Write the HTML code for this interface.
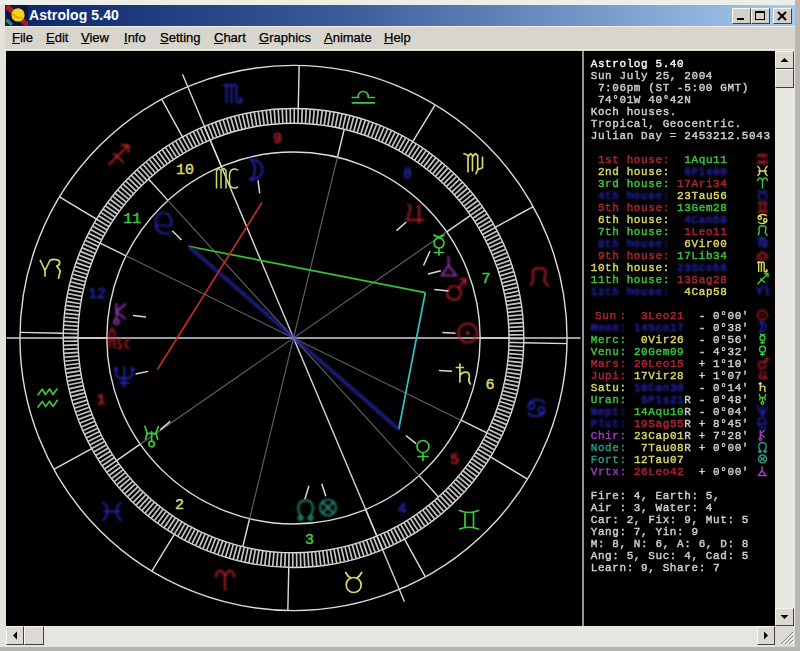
<!DOCTYPE html>
<html><head><meta charset="utf-8"><style>
html,body{margin:0;padding:0;}
body{width:800px;height:651px;overflow:hidden;position:relative;background:#e4e2dc;font-family:"Liberation Sans",sans-serif;}
#top{position:absolute;left:0;top:0;width:800px;height:5px;background:#eeeee8;}
#rframe{position:absolute;left:795px;top:0;width:5px;height:651px;background:#b8b6b0;}
#bframe{position:absolute;left:0;top:647px;width:800px;height:4px;background:#b6b4ae;}
#title{position:absolute;left:5px;top:5px;width:790px;height:21px;background:linear-gradient(to right,#0a246a 0%,#3a5a98 42%,#a6caf0 100%);}
#ttext{position:absolute;left:24px;top:1px;color:#fff;font-weight:bold;font-size:14px;line-height:18px;letter-spacing:0.1px;}
#icon{position:absolute;left:3px;top:1px;width:20px;height:20px;}
.btn{position:absolute;top:3px;width:17px;height:14px;background:#d4d0c8;border-top:1px solid #fff;border-left:1px solid #fff;border-right:1px solid #404040;border-bottom:1px solid #404040;}
#menu{position:absolute;left:5px;top:26px;width:790px;height:25px;background:#d8d5cc;border-top:1px solid #f0f0ec;box-sizing:border-box;}
#menu:after{content:"";position:absolute;left:0;right:0;bottom:1px;height:1px;background:#f0efea;}
.mi{position:absolute;top:4px;font-size:13px;line-height:14px;color:#000;-webkit-text-stroke:0.25px #000;}
.mi u{text-decoration:underline;}
#canvas{position:absolute;left:6px;top:51px;width:769px;height:575px;background:#000;overflow:hidden;}
#vs{position:absolute;left:775px;top:51px;width:20px;height:575px;background:#e8e7e2;}
#hs{position:absolute;left:6px;top:626px;width:769px;height:21px;background:#e6e5e0;}
#grip{position:absolute;left:775px;top:626px;width:20px;height:21px;background:#dcdad4;}
.sbtn{position:absolute;background:#dcd9d2;border-top:1px solid #f4f4f4;border-left:1px solid #f4f4f4;border-right:1px solid #404040;border-bottom:1px solid #404040;}
svg text.mono{font-family:"Liberation Mono",monospace;font-size:11px;letter-spacing:0.6px;stroke-width:0.4px;}
svg text.hn{font-family:"Liberation Mono",monospace;font-size:15px;text-anchor:middle;stroke-width:0.5px;}
</style></head><body>
<div id="top"></div>
<div id="title">
 <svg id="icon" viewBox="0 0 20 20" style="left:1px;top:0px;width:22px;height:21px;"><rect x="0" y="0" width="22" height="21" fill="#0c1440"/><path d="M0 1L21 20" stroke="#a81c1c" stroke-width="5"/><path d="M0 14L5 19" stroke="#2a8a6a" stroke-width="3"/><circle cx="11" cy="9.5" r="6.3" fill="#f2d214"/><path d="M6 8 Q9 13 15 12" stroke="#e09a10" stroke-width="1.6" fill="none"/></svg>
 <div id="ttext">Astrolog 5.40</div>
 <div class="btn" style="left:727px;"><svg width="17" height="14"><rect x="4" y="9" width="7" height="2" fill="#000"/></svg></div>
 <div class="btn" style="left:746px;"><svg width="17" height="14"><rect x="3.5" y="2.5" width="9" height="8" fill="none" stroke="#000" stroke-width="1"/><rect x="3" y="2" width="10" height="2" fill="#000"/></svg></div>
 <div class="btn" style="left:768px;"><svg width="17" height="14"><path d="M4 3L12 11M12 3L4 11" stroke="#000" stroke-width="2"/></svg></div>
</div>
<div id="menu">
 <div class="mi" style="left:7px"><u>F</u>ile</div>
 <div class="mi" style="left:41px"><u>E</u>dit</div>
 <div class="mi" style="left:76px"><u>V</u>iew</div>
 <div class="mi" style="left:119px"><u>I</u>nfo</div>
 <div class="mi" style="left:155px"><u>S</u>etting</div>
 <div class="mi" style="left:209px"><u>C</u>hart</div>
 <div class="mi" style="left:254px"><u>G</u>raphics</div>
 <div class="mi" style="left:319px"><u>A</u>nimate</div>
 <div class="mi" style="left:379px"><u>H</u>elp</div>
</div>
<div id="canvas">
<svg width="769" height="575" viewBox="6 51 769 575" style="position:absolute;left:0;top:0;">
<defs>
<filter id="bg" x="-5%" y="-5%" width="110%" height="110%"><feGaussianBlur stdDeviation="0.4"/></filter>
<filter id="bl" x="-30%" y="-30%" width="160%" height="160%"><feGaussianBlur stdDeviation="1.0"/></filter>
<filter id="br" x="-10%" y="-30%" width="120%" height="160%"><feGaussianBlur stdDeviation="0.8"/></filter>
<filter id="bm" x="-30%" y="-30%" width="160%" height="160%"><feGaussianBlur stdDeviation="0.8"/></filter>
<filter id="bb" x="-10%" y="-10%" width="120%" height="120%"><feGaussianBlur stdDeviation="1.4"/></filter>
<filter id="bt" x="-5%" y="-5%" width="110%" height="110%"><feGaussianBlur stdDeviation="0.45"/></filter>
<filter id="bs" x="-30%" y="-30%" width="160%" height="160%"><feGaussianBlur stdDeviation="0.35"/></filter>
</defs>
<ellipse cx="293.5" cy="338" rx="273.55" ry="272.6" fill="none" stroke="#dcdcdc" stroke-width="1.4"/>
<ellipse cx="293.5" cy="338" rx="230.3" ry="229.5" fill="none" stroke="#dcdcdc" stroke-width="1.4"/>
<ellipse cx="293.5" cy="338" rx="215.55" ry="214.8" fill="none" stroke="#dcdcdc" stroke-width="1.4"/>
<ellipse cx="293.5" cy="338" rx="186.65" ry="186" fill="none" stroke="#dcdcdc" stroke-width="1.4"/>
<path d="M181.89 521.77L174.26 534.34M185.13 523.68L177.71 536.39M188.4 525.53L181.2 538.37M191.7 527.33L184.73 540.29M195.03 529.08L188.29 542.15M198.39 530.76L191.88 543.95M201.78 532.38L195.5 545.69M205.2 533.95L199.16 547.36M208.64 535.46L202.84 548.97M212.11 536.9L206.55 550.51M215.61 538.29L210.28 551.99M219.13 539.61L214.04 553.41M222.67 540.87L217.83 554.76M226.24 542.07L221.63 556.04M229.82 543.21L225.46 557.26M233.42 544.29L229.31 558.41M237.05 545.3L233.18 559.49M240.69 546.25L237.07 560.5M244.34 547.14L240.98 561.45M248.01 547.96L244.9 562.33M251.7 548.72L248.83 563.14M255.39 549.42L252.78 563.88M259.1 550.05L256.75 564.56M262.82 550.61L260.72 565.16M266.55 551.11L264.7 565.7M270.28 551.55L268.7 566.16M274.03 551.92L272.7 566.56M277.78 552.23L276.7 566.89M281.53 552.47L280.71 567.15M285.29 552.64L284.73 567.33M289.05 552.75L288.75 567.45M292.81 552.8L292.76 567.5M296.57 552.78L296.78 567.48M300.33 552.69L300.8 567.38M304.09 552.54L304.82 567.22M307.85 552.32L308.83 566.99M311.6 552.04L312.84 566.69M315.35 551.69L316.84 566.32M319.09 551.28L320.84 565.88M322.82 550.8L324.82 565.37M326.54 550.26L328.8 564.79M330.25 549.65L332.77 564.14M333.95 548.98L336.72 563.42M337.64 548.25L340.66 562.64M341.32 547.45L344.59 561.78M344.98 546.58L348.5 560.86M348.62 545.66L352.4 559.87M352.25 544.67L356.27 558.81M355.86 543.61L360.13 557.69M359.45 542.5L363.97 556.49M363.03 541.32L367.78 555.23M366.58 540.08L371.58 553.91M370.1 538.78L375.35 552.52M373.61 537.42L379.09 551.06M377.09 535.99L382.81 549.54M380.54 534.51L386.5 547.96M383.97 532.96L390.16 546.31M387.37 531.36L393.8 544.59M390.74 529.7L397.4 542.82M394.09 527.98L400.97 540.98M397.4 526.2L404.51 539.08M400.68 524.36L408.01 537.12M403.93 522.47L411.48 535.1M407.14 520.52L414.92 533.01M410.32 518.52L418.31 530.87M413.46 516.46L421.67 528.67M416.57 514.35L424.99 526.41M419.64 512.18L428.27 524.1M422.67 509.96L431.51 521.73M425.66 507.69L434.71 519.3M428.62 505.36L437.86 516.82M431.53 502.99L440.97 514.28M434.39 500.56L444.04 511.69M437.22 498.09L447.06 509.04M440 495.56L450.03 506.34M442.74 492.99L452.95 503.6M445.43 490.37L455.83 500.8M448.08 487.71L458.65 497.95M450.67 484.99L461.43 495.05M453.22 482.24L464.16 492.11M455.73 479.44L466.83 489.12M458.18 476.6L469.45 486.08M460.58 473.71L472.02 483M462.93 470.78L474.53 479.87M465.23 467.82L476.98 476.7M467.48 464.81L479.39 473.49M469.67 461.77L481.73 470.24M471.81 458.68L484.02 466.94M473.9 455.56L486.25 463.61M475.93 452.41L488.42 460.24M477.91 449.22L490.53 456.83M479.83 445.99L492.58 453.38M481.69 442.74L494.57 449.9M483.5 439.45L496.5 446.39M485.24 436.13L498.37 442.84M486.93 432.78L500.17 439.26M488.56 429.4L501.91 435.65M490.14 425.99L503.59 432.02M491.65 422.56L505.21 428.35M493.1 419.1L506.76 424.65M494.49 415.62L508.24 420.93M495.82 412.11L509.66 417.18M497.08 408.58L511.02 413.41M498.29 405.03L512.3 409.62M499.43 401.46L513.52 405.8M500.51 397.87L514.68 401.96M501.53 394.26L515.76 398.11M502.48 390.63L516.78 394.23M503.37 386.99L517.73 390.34M504.2 383.33L518.62 386.43M504.96 379.66L519.43 382.51M505.66 375.98L520.18 378.57M506.29 372.28L520.85 374.63M506.86 368.57L521.46 370.67M507.36 364.86L522 366.7M507.8 361.13L522.46 362.72M508.17 357.4L522.86 358.73M508.48 353.67L523.19 354.74M508.72 349.93L523.45 350.74M508.9 346.18L523.64 346.74M509.01 342.43L523.75 342.74M509.05 338.69L523.8 338.73M509.03 334.94L523.78 334.73M508.94 331.19L523.69 330.72M508.79 327.44L523.52 326.72M508.57 323.7L523.29 322.72M508.29 319.96L522.99 318.73M507.94 316.23L522.62 314.74M507.53 312.5L522.18 310.76M507.05 308.79L521.66 306.79M506.5 305.08L521.08 302.82M505.9 301.38L520.43 298.87M505.22 297.69L519.71 294.93M504.48 294.01L518.92 291M503.68 290.35L518.06 287.09M502.81 286.7L517.14 283.19M501.88 283.07L516.15 279.31M500.89 279.45L515.08 275.45M499.83 275.85L513.95 271.6M498.71 272.28L512.76 267.78M497.53 268.72L511.49 263.98M496.29 265.18L510.16 260.2M494.98 261.66L508.77 256.44M493.61 258.17L507.31 252.71M492.18 254.7L505.78 249M490.7 251.26L504.19 245.32M489.15 247.84L502.54 241.67M487.54 244.45L500.82 238.05M485.87 241.09L499.03 234.46M484.14 237.76L497.19 230.9M482.36 234.46L495.28 227.38M480.52 231.19L493.32 223.89M478.62 227.96L491.29 220.43M476.66 224.76L489.2 217.01M474.65 221.59L487.05 213.62M472.58 218.45L484.84 210.27M470.46 215.36L482.57 206.97M468.29 212.3L480.25 203.7M466.06 209.28L477.87 200.47M463.78 206.3L475.43 197.28M461.45 203.36L472.94 194.14M459.06 200.46L470.39 191.04M456.63 197.6L467.79 187.99M454.15 194.78L465.14 184.98M451.61 192.01L462.43 182.02M449.03 189.28L459.68 179.1M446.4 186.6L456.87 176.24M443.73 183.96L454.01 173.42M441.01 181.37L451.1 170.66M438.24 178.83L448.15 167.94M435.43 176.34L445.15 165.28M432.58 173.9L442.1 162.66M429.69 171.5L439.01 160.11M426.75 169.16L435.87 157.6M423.77 166.87L432.69 155.16M420.75 164.63L429.46 152.76M417.7 162.44L426.2 150.43M414.61 160.31L422.89 148.15M411.47 158.23L419.55 145.93M408.31 156.2L416.17 143.76M405.11 154.23L412.74 141.66M401.87 152.32L409.29 139.61M398.6 150.47L405.8 137.63M395.3 148.67L402.27 135.71M391.97 146.92L398.71 133.85M388.61 145.24L395.12 132.05M385.22 143.62L391.5 130.31M381.8 142.05L387.84 128.64M378.36 140.54L384.16 127.03M374.89 139.1L380.45 125.49M371.39 137.71L376.72 124.01M367.87 136.39L372.96 122.59M364.33 135.13L369.17 121.24M360.76 133.93L365.37 119.96M357.18 132.79L361.54 118.74M353.58 131.71L357.69 117.59M349.95 130.7L353.82 116.51M346.31 129.75L349.93 115.5M342.66 128.86L346.02 114.55M338.99 128.04L342.1 113.67M335.3 127.28L338.17 112.86M331.61 126.58L334.22 112.12M327.9 125.95L330.25 111.44M324.18 125.39L326.28 110.84M320.45 124.89L322.3 110.3M316.72 124.45L318.3 109.84M312.97 124.08L314.3 109.44M309.22 123.77L310.3 109.11M305.47 123.53L306.29 108.85M301.71 123.36L302.27 108.67M297.95 123.25L298.25 108.55M294.19 123.2L294.24 108.5M290.43 123.22L290.22 108.52M286.67 123.31L286.2 108.62M282.91 123.46L282.18 108.78M279.15 123.68L278.17 109.01M275.4 123.96L274.16 109.31M271.65 124.31L270.16 109.68M267.91 124.72L266.16 110.12M264.18 125.2L262.18 110.63M260.46 125.74L258.2 111.21M256.75 126.35L254.23 111.86M253.05 127.02L250.28 112.58M249.36 127.75L246.34 113.36M245.68 128.55L242.41 114.22M242.02 129.42L238.5 115.14M238.38 130.34L234.6 116.13M234.75 131.33L230.73 117.19M231.14 132.39L226.87 118.31M227.55 133.5L223.03 119.51M223.97 134.68L219.22 120.77M220.42 135.92L215.42 122.09M216.9 137.22L211.65 123.48M213.39 138.58L207.91 124.94M209.91 140.01L204.19 126.46M206.46 141.49L200.5 128.04M203.03 143.04L196.84 129.69M199.63 144.64L193.2 131.41M196.26 146.3L189.6 133.18M192.91 148.02L186.03 135.02M189.6 149.8L182.49 136.92M186.32 151.64L178.99 138.88M183.07 153.53L175.52 140.9M179.86 155.48L172.08 142.99M176.68 157.48L168.69 145.13M173.54 159.54L165.33 147.33M170.43 161.65L162.01 149.59M167.36 163.82L158.73 151.9M164.33 166.04L155.49 154.27M161.34 168.31L152.29 156.7M158.38 170.64L149.14 159.18M155.47 173.01L146.03 161.72M152.61 175.44L142.96 164.31M149.78 177.91L139.94 166.96M147 180.44L136.97 169.66M144.26 183.01L134.05 172.4M141.57 185.63L131.17 175.2M138.92 188.29L128.35 178.05M136.33 191.01L125.57 180.95M133.78 193.76L122.84 183.89M131.27 196.56L120.17 186.88M128.82 199.4L117.55 189.92M126.42 202.29L114.98 193M124.07 205.22L112.47 196.13M121.77 208.18L110.02 199.3M119.52 211.19L107.61 202.51M117.33 214.23L105.27 205.76M115.19 217.32L102.98 209.06M113.1 220.44L100.75 212.39M111.07 223.59L98.58 215.76M109.09 226.78L96.47 219.17M107.17 230.01L94.42 222.62M105.31 233.26L92.43 226.1M103.5 236.55L90.5 229.61M101.76 239.87L88.63 233.16M100.07 243.22L86.83 236.74M98.44 246.6L85.09 240.35M96.86 250.01L83.41 243.98M95.35 253.44L81.79 247.65M93.9 256.9L80.24 251.35M92.51 260.38L78.76 255.07M91.18 263.89L77.34 258.82M89.92 267.42L75.98 262.59M88.71 270.97L74.7 266.38M87.57 274.54L73.48 270.2M86.49 278.13L72.32 274.04M85.47 281.74L71.24 277.89M84.52 285.37L70.22 281.77M83.63 289.01L69.27 285.66M82.8 292.67L68.38 289.57M82.04 296.34L67.57 293.49M81.34 300.02L66.82 297.43M80.71 303.72L66.15 301.37M80.14 307.43L65.54 305.33M79.64 311.14L65 309.3M79.2 314.87L64.54 313.28M78.83 318.6L64.14 317.27M78.52 322.33L63.81 321.26M78.28 326.07L63.55 325.26M78.1 329.82L63.36 329.26M77.99 333.57L63.25 333.26M77.95 337.31L63.2 337.27M77.97 341.06L63.22 341.27M78.06 344.81L63.31 345.28M78.21 348.56L63.48 349.28M78.43 352.3L63.71 353.28M78.71 356.04L64.01 357.27M79.06 359.77L64.38 361.26M79.47 363.5L64.82 365.24M79.95 367.21L65.34 369.21M80.5 370.92L65.92 373.18M81.1 374.62L66.57 377.13M81.78 378.31L67.29 381.07M82.52 381.99L68.08 385M83.32 385.65L68.94 388.91M84.19 389.3L69.86 392.81M85.12 392.93L70.85 396.69M86.11 396.55L71.92 400.55M87.17 400.15L73.05 404.4M88.29 403.72L74.24 408.22M89.47 407.28L75.51 412.02M90.71 410.82L76.84 415.8M92.02 414.34L78.23 419.56M93.39 417.83L79.69 423.29M94.82 421.3L81.22 427M96.3 424.74L82.81 430.68M97.85 428.16L84.46 434.33M99.46 431.55L86.18 437.95M101.13 434.91L87.97 441.54M102.86 438.24L89.81 445.1M104.64 441.54L91.72 448.62M106.48 444.81L93.68 452.11M108.38 448.04L95.71 455.57M110.34 451.24L97.8 458.99M112.35 454.41L99.95 462.38M114.42 457.55L102.16 465.73M116.54 460.64L104.43 469.03M118.71 463.7L106.75 472.3M120.94 466.72L109.13 475.53M123.22 469.7L111.57 478.72M125.55 472.64L114.06 481.86M127.94 475.54L116.61 484.96M130.37 478.4L119.21 488.01M132.85 481.22L121.86 491.02M135.39 483.99L124.57 493.98M137.97 486.72L127.32 496.9M140.6 489.4L130.13 499.76M143.27 492.04L132.99 502.58M145.99 494.63L135.9 505.34M148.76 497.17L138.85 508.06M151.57 499.66L141.85 510.72M154.42 502.1L144.9 513.34M157.31 504.5L147.99 515.89M160.25 506.84L151.13 518.4M163.23 509.13L154.31 520.84M166.25 511.37L157.54 523.24M169.3 513.56L160.8 525.57M172.39 515.69L164.11 527.85M175.53 517.77L167.45 530.07M178.69 519.8L170.83 532.24" stroke="#c4c4c4" stroke-width="1.7" fill="none"/>
<path d="M174.26 534.34L151.86 571.21M288.75 567.45L287.85 610.54M404.51 539.08L425.36 576.84M490.53 456.83L527.53 479.14M523.75 342.74L567 343.63M495.28 227.38L533.18 206.6M412.74 141.66L435.14 104.79M298.25 108.55L299.15 65.46M182.49 136.92L161.64 99.16M96.47 219.17L59.47 196.86M63.25 333.26L20 332.37M91.72 448.62L53.82 469.4" stroke="#dcdcdc" stroke-width="1.4" fill="none"/>
<path d="M140.26 444.2L446.74 231.8M249.56 518.77L337.44 157.23M419.08 475.61L167.92 200.39M460.95 420.17L126.05 255.83" stroke="#5e5e5e" stroke-width="1.2" fill="none"/>
<path d="M77.95 338L106.85 338M116.54 460.64L140.26 444.2M242.76 546.76L249.56 518.77M376.86 536.09L365.68 509.53M438.52 496.91L419.08 475.61M486.88 432.89L460.95 420.17M509.05 338L480.15 338M470.46 215.36L446.74 231.8M344.24 129.24L337.44 157.23M210.14 139.91L221.32 166.47M148.48 179.09L167.92 200.39M100.12 243.11L126.05 255.83" stroke="#dcdcdc" stroke-width="1.4" fill="none"/>
<path d="M6.5 338L580.5 338M404.49 601.75L182.51 74.25" stroke="#d4d4d4" stroke-width="1.4" fill="none"/>
<text x="101.04" y="403.64" fill="#cc2232" stroke="#cc2232" class="hn" filter="url(#bl)">1</text>
<text x="179.55" y="509.35" fill="#d8d866" stroke="#d8d866" class="hn">2</text>
<text x="309.56" y="543.86" fill="#3cc83c" stroke="#3cc83c" class="hn">3</text>
<text x="401.93" y="512.99" fill="#2a2ac0" stroke="#2a2ac0" class="hn" filter="url(#bl)">4</text>
<text x="454.66" y="464.37" fill="#cc2232" stroke="#cc2232" class="hn" filter="url(#bl)">5</text>
<text x="489.95" y="389.08" fill="#d8d866" stroke="#d8d866" class="hn">6</text>
<text x="485.96" y="283.36" fill="#3cc83c" stroke="#3cc83c" class="hn">7</text>
<text x="407.45" y="177.65" fill="#2a2ac0" stroke="#2a2ac0" class="hn" filter="url(#bl)">8</text>
<text x="277.44" y="143.14" fill="#cc2232" stroke="#cc2232" class="hn" filter="url(#bl)">9</text>
<text x="185.07" y="174.01" fill="#d8d866" stroke="#d8d866" class="hn">10</text>
<text x="132.34" y="222.63" fill="#3cc83c" stroke="#3cc83c" class="hn">11</text>
<text x="97.05" y="297.92" fill="#2a2ac0" stroke="#2a2ac0" class="hn" filter="url(#bl)">12</text>
<path transform="translate(225 580)" d="M0 10L0 -3C-1 -8 -4 -10 -6 -9C-8 -8 -9 -6 -9 -3M0 -3C1 -8 4 -10 6 -9C8 -8 9 -6 9 -3" stroke="#cc2232" stroke-width="1.7" fill="none" stroke-linejoin="round" stroke-linecap="round" filter="url(#bl)"/>
<path transform="translate(353.7 582.5)" d="M7.5 2.5A7.5 7.5 0 1 1 -7.5 2.5A7.5 7.5 0 1 1 7.5 2.5M-8 -10Q-6 -6 -3 -4.5M8 -10Q6 -6 3 -4.5" stroke="#d8d866" stroke-width="1.7" fill="none" stroke-linejoin="round" stroke-linecap="round"/>
<path transform="translate(469 519.5)" d="M-9.5 -9Q0 -5 9.5 -9M-9.5 9.5Q0 6 9.5 9.5M-4 -6.5L-4 7.5M4.5 -6.5L4.5 7.5" stroke="#3cc83c" stroke-width="1.7" fill="none" stroke-linejoin="round" stroke-linecap="round"/>
<path transform="translate(536.5 408)" d="M-8 -3C-7 -9 5 -10 8 -5M8 3C7 9 -5 10 -8 5M-2 -2A3 3 0 1 1 -8 -2A3 3 0 1 1 -2 -2M8 2A3 3 0 1 1 2 2A3 3 0 1 1 8 2" stroke="#2a2ac0" stroke-width="1.7" fill="none" stroke-linejoin="round" stroke-linecap="round" filter="url(#bl)"/>
<path transform="translate(539.2 277.3)" d="M-8.5 8L-6 3.5L-6.5 -6L-4 -9L4 -9L6.5 -6L5 3.5L9 9" stroke="#cc2232" stroke-width="1.7" fill="none" stroke-linejoin="round" stroke-linecap="round" filter="url(#bl)"/>
<path transform="translate(474 163.7)" d="M-10 -10L-6 -8.5L-6 8M-6 -7L-3.5 -10L-1.5 -8.5L-1.5 7M-1.5 -7L1.5 -10L3.7 -8L3.7 6L2 10M3.7 6L8.5 4L8.5 -6.5" stroke="#d8d866" stroke-width="1.7" fill="none" stroke-linejoin="round" stroke-linecap="round"/>
<path transform="translate(363.4 96.5)" d="M-11 6.3L11 6.3M-11 1L-5 1C-6.5 -7 6 -7 4.8 1L11 1" stroke="#3cc83c" stroke-width="1.7" fill="none" stroke-linejoin="round" stroke-linecap="round"/>
<path transform="translate(233.5 93.5)" d="M-10 -8L-7 -9L-7 9M-7 -6C-6 -10 -2 -10 -2 -6L-2 9M-2 -6C-1 -10 3 -10 3 -6L3 7C3 9 6 9 9 7M9 7L6.5 4M9 7L5.5 9.5" stroke="#2a2ac0" stroke-width="1.7" fill="none" stroke-linejoin="round" stroke-linecap="round" filter="url(#bl)"/>
<path transform="translate(118.5 155.2)" d="M-9.5 9.5L10 -10M3 -10L10 -10L10 -3M-4.5 -1.5L4.5 7" stroke="#cc2232" stroke-width="1.7" fill="none" stroke-linejoin="round" stroke-linecap="round" filter="url(#bl)"/>
<path transform="translate(50.3 268.5)" d="M-10 -8L-5.3 2L-0.4 -8M-5.3 2L-5.3 7.5M-0.4 -8C3 -10 9.4 -9 9.4 -6C9.4 -3 6.4 -2.5 6.4 -2.5L10 2.4L8.2 9.7" stroke="#d8d866" stroke-width="1.7" fill="none" stroke-linejoin="round" stroke-linecap="round"/>
<path transform="translate(47.7 398)" d="M-9.7 -3.3L-5.4 -8.8L-2.4 -3.5L1.9 -9L5.3 -3.5L9.3 -9M-9.7 9L-5.4 3.5L-2.1 8.4L1.9 3.2L5.3 8.4L9.6 2.3" stroke="#3cc83c" stroke-width="1.7" fill="none" stroke-linejoin="round" stroke-linecap="round"/>
<path transform="translate(112 511.3)" d="M-9 -9C-3 -4 -3 4 -9 9M9 -9C3 -4 3 4 9 9M-8 0L8 0" stroke="#2a2ac0" stroke-width="1.7" fill="none" stroke-linejoin="round" stroke-linecap="round" filter="url(#bl)"/>
<path transform="translate(467.7 333)" d="M9.5 0A9.5 9.5 0 1 1 -9.5 0A9.5 9.5 0 1 1 9.5 0M1 0A1 1 0 1 1 -1 0A1 1 0 1 1 1 0" stroke="#cc2232" stroke-width="1.7" fill="none" stroke-linejoin="round" stroke-linecap="round" filter="url(#bl)"/>
<path transform="translate(255.7 169.5)" d="M-6 -10.5C11 -10.5 11 10.5 -6 10.5C1 6 1 -6 -6 -10.5Z" stroke="#2a2ac0" stroke-width="1.7" fill="none" stroke-linejoin="round" stroke-linecap="round" filter="url(#bl)"/>
<path transform="translate(439 245)" d="M-5 -10Q0 -6 5 -10M5 -2A5 5 0 1 1 -5 -2A5 5 0 1 1 5 -2M0 3L0 10M-4.5 7.5L4.5 7.5" stroke="#3cc83c" stroke-width="1.7" fill="none" stroke-linejoin="round" stroke-linecap="round"/>
<path transform="translate(423 450)" d="M6 -3.5A6 6 0 1 1 -6 -3.5A6 6 0 1 1 6 -3.5M0 2.5L0 10.5M-5 6.5L5 6.5" stroke="#3cc83c" stroke-width="1.7" fill="none" stroke-linejoin="round" stroke-linecap="round"/>
<path transform="translate(455 289)" d="M6 4A7 7 0 1 1 -8 4A7 7 0 1 1 6 4M4 -1L10.5 -10M5 -10L10.5 -10L10.5 -4.5" stroke="#cc2232" stroke-width="1.7" fill="none" stroke-linejoin="round" stroke-linecap="round" filter="url(#bl)"/>
<path transform="translate(413.8 213.8)" d="M-5.8 -9C-3 -8 -3 -6 -3.5 -4L-6.7 6L10 6M5.2 -9L5.2 9.5" stroke="#cc2232" stroke-width="1.7" fill="none" stroke-linejoin="round" stroke-linecap="round" filter="url(#bl)"/>
<path transform="translate(464.4 374)" d="M-4.5 -10L-4.5 8M-8 -6.5L-1 -6.5M-4.5 1.5C-2 -3 5 -3 5 2C5 5 3 7 6 10" stroke="#d8d866" stroke-width="1.7" fill="none" stroke-linejoin="round" stroke-linecap="round"/>
<path transform="translate(151.6 436.2)" d="M-6.7 -10L-4.3 -2.8L-6.1 3M6.7 -9.5L4.3 -2.8L6.1 3M-4.9 -2.8L4.9 -2.8M0 -4.6L0 4.6M2.8 7.7A2.8 2.8 0 1 1 -2.8 7.7A2.8 2.8 0 1 1 2.8 7.7" stroke="#3cc83c" stroke-width="1.7" fill="none" stroke-linejoin="round" stroke-linecap="round"/>
<path transform="translate(124.2 376.8)" d="M-8.5 -9L-8 -2C-7 3 7 3 8 -2L8.5 -9M0 -10L0 10M-5 6L5 6M-9.5 -7L-8.5 -9.5L-7 -7M7 -7L8.5 -9.5L9.5 -7" stroke="#2a2ac0" stroke-width="1.7" fill="none" stroke-linejoin="round" stroke-linecap="round" filter="url(#bl)"/>
<path transform="translate(164.5 223.5)" d="M-9 2L7 2C8 -6 3 -11 -1 -11C-6 -11 -9 -6 -9 0C-9 7 -4 10 0 10L7 10" stroke="#2a2ac0" stroke-width="1.7" fill="none" stroke-linejoin="round" stroke-linecap="round" filter="url(#bl)"/>
<path transform="translate(121 313.8)" d="M-4.5 -10L-4.5 5M-4.5 -2L4.5 -10M-4.5 -2L4.5 5M-2 8A2.5 2.5 0 1 1 -7 8A2.5 2.5 0 1 1 -2 8" stroke="#a03cc0" stroke-width="1.7" fill="none" stroke-linejoin="round" stroke-linecap="round" filter="url(#bm)"/>
<path transform="translate(305.6 509.4)" d="M-5 6C-9 0 -8 -9 0 -9C8 -9 9 0 5 6M-5 6L-7.5 9L-5 11L-2.5 8.5L-5 6M5 6L7.5 9L5 11L2.5 8.5L5 6" stroke="#2c9884" stroke-width="1.7" fill="none" stroke-linejoin="round" stroke-linecap="round" filter="url(#bm)"/>
<path transform="translate(328 507.5)" d="M8 0A8 8 0 1 1 -8 0A8 8 0 1 1 8 0M-5.6 -5.6L5.6 5.6M5.6 -5.6L-5.6 5.6" stroke="#2c9884" stroke-width="1.7" fill="none" stroke-linejoin="round" stroke-linecap="round" filter="url(#bm)"/>
<path transform="translate(449.5 266.5)" d="M-1 -10L-1 -1M-1 -1L-8 9L7 9L-1 -1" stroke="#a03cc0" stroke-width="1.7" fill="none" stroke-linejoin="round" stroke-linecap="round" filter="url(#bm)"/>
<path d="M442.41 332.38L455.5 333.37M259.73 193.36L258.03 180.42M423.52 265.45L430.05 251.02M405.91 435.49L416.08 443.65M434.34 289.49L448.58 291.11M396.48 230.66L406.26 222M438.88 370.6L452.08 371.29M170.2 421.4L160.23 429.9M148.29 371.37L135.53 374.08M181.52 240.02L172.29 230.79M145.99 316.91L133.01 315.56M308.94 485.7L304.91 499.1M321.77 483.8L325.82 496.26M427.98 274.03L440.83 270.71" stroke="#d8d8d8" stroke-width="1.5" fill="none"/>
<path transform="translate(227 178.5)" d="M-10.5 10L-10.5 -8L-8.5 -10L-6 -8L-6 10M-6 -8L-3 -10L-1 -8L-1 10M11 -8C9 -10.5 2.5 -10.5 2.5 -3L2.5 4C2.5 10.5 9 10.5 11 8" stroke="#d8d866" stroke-width="1.5" fill="none"/>
<path transform="translate(119.5 338.4)" d="M-10 10L-10 -6L-7.5 -10L-5 -6L-5 10M-10 1L-5 1M2 1C-1 -0.5 -2.5 3 0 5C2.5 7 3 10 -2 10M10 2C5 0 4 10 10 10" stroke="#cc2232" stroke-width="1.5" fill="none" filter="url(#bl)"/>
<line x1="188.68" y1="246.29" x2="425.33" y2="292.59" stroke="#34c434" stroke-width="1.7"/>
<line x1="425.33" y1="292.59" x2="398.72" y2="429.25" stroke="#34c4c4" stroke-width="1.7"/>
<line x1="188.68" y1="246.29" x2="398.72" y2="429.25" stroke="#2a2ab4" stroke-width="2.6" filter="url(#bb)"/>
<line x1="261.89" y1="202.62" x2="157.58" y2="369.24" stroke="#c42a2a" stroke-width="1.7"/>
<line x1="583" y1="51" x2="583" y2="626" stroke="#949494" stroke-width="2"/>
<g filter="url(#bt)"><text transform="translate(590.7 67) scale(1 1.03)" fill="#f4f4f4" stroke="#f4f4f4" class="mono">Astrolog&#160;5.40</text>
<text transform="translate(590.7 79) scale(1 1.03)" fill="#d0d0d0" stroke="#d0d0d0" class="mono">Sun&#160;July&#160;25,&#160;2004</text>
<text transform="translate(590.7 91) scale(1 1.03)" fill="#d0d0d0" stroke="#d0d0d0" class="mono">&#160;7:06pm&#160;(ST&#160;-5:00&#160;GMT)</text>
<text transform="translate(590.7 103) scale(1 1.03)" fill="#d0d0d0" stroke="#d0d0d0" class="mono">&#160;74°01W&#160;40°42N</text>
<text transform="translate(590.7 115) scale(1 1.03)" fill="#d0d0d0" stroke="#d0d0d0" class="mono">Koch&#160;houses.</text>
<text transform="translate(590.7 127) scale(1 1.03)" fill="#d0d0d0" stroke="#d0d0d0" class="mono">Tropical,&#160;Geocentric.</text>
<text transform="translate(590.7 139) scale(1 1.03)" fill="#d0d0d0" stroke="#d0d0d0" class="mono">Julian&#160;Day&#160;=&#160;2453212.5043</text>
<text transform="translate(590.7 163) scale(1 1.03)" fill="#b42434" stroke="#b42434" class="mono">&#160;1st&#160;house:</text>
<text transform="translate(677.1 163) scale(1 1.03)" fill="#3cc83c" stroke="#3cc83c" class="mono">&#160;1Aqu11</text>
<text transform="translate(590.7 175) scale(1 1.03)" fill="#d8d866" stroke="#d8d866" class="mono">&#160;2nd&#160;house:</text>
<text transform="translate(677.1 175) scale(1 1.03)" fill="#2a2ac0" stroke="#2a2ac0" class="mono" filter="url(#bl)">&#160;6Pis00</text>
<text transform="translate(590.7 187) scale(1 1.03)" fill="#3cc83c" stroke="#3cc83c" class="mono">&#160;3rd&#160;house:</text>
<text transform="translate(677.1 187) scale(1 1.03)" fill="#b42434" stroke="#b42434" class="mono">17Ari34</text>
<text transform="translate(590.7 199) scale(1 1.03)" fill="#2a2ac0" stroke="#2a2ac0" class="mono" filter="url(#bl)">&#160;4th&#160;house:</text>
<text transform="translate(677.1 199) scale(1 1.03)" fill="#d8d866" stroke="#d8d866" class="mono">23Tau56</text>
<text transform="translate(590.7 211) scale(1 1.03)" fill="#b42434" stroke="#b42434" class="mono">&#160;5th&#160;house:</text>
<text transform="translate(677.1 211) scale(1 1.03)" fill="#3cc83c" stroke="#3cc83c" class="mono">13Gem28</text>
<text transform="translate(590.7 223) scale(1 1.03)" fill="#d8d866" stroke="#d8d866" class="mono">&#160;6th&#160;house:</text>
<text transform="translate(677.1 223) scale(1 1.03)" fill="#2a2ac0" stroke="#2a2ac0" class="mono" filter="url(#bl)">&#160;4Can58</text>
<text transform="translate(590.7 235) scale(1 1.03)" fill="#3cc83c" stroke="#3cc83c" class="mono">&#160;7th&#160;house:</text>
<text transform="translate(677.1 235) scale(1 1.03)" fill="#b42434" stroke="#b42434" class="mono">&#160;1Leo11</text>
<text transform="translate(590.7 247) scale(1 1.03)" fill="#2a2ac0" stroke="#2a2ac0" class="mono" filter="url(#bl)">&#160;8th&#160;house:</text>
<text transform="translate(677.1 247) scale(1 1.03)" fill="#d8d866" stroke="#d8d866" class="mono">&#160;6Vir00</text>
<text transform="translate(590.7 259) scale(1 1.03)" fill="#b42434" stroke="#b42434" class="mono">&#160;9th&#160;house:</text>
<text transform="translate(677.1 259) scale(1 1.03)" fill="#3cc83c" stroke="#3cc83c" class="mono">17Lib34</text>
<text transform="translate(590.7 271) scale(1 1.03)" fill="#d8d866" stroke="#d8d866" class="mono">10th&#160;house:</text>
<text transform="translate(677.1 271) scale(1 1.03)" fill="#2a2ac0" stroke="#2a2ac0" class="mono" filter="url(#bl)">23Sco56</text>
<text transform="translate(590.7 283) scale(1 1.03)" fill="#3cc83c" stroke="#3cc83c" class="mono">11th&#160;house:</text>
<text transform="translate(677.1 283) scale(1 1.03)" fill="#b42434" stroke="#b42434" class="mono">13Sag28</text>
<text transform="translate(590.7 295) scale(1 1.03)" fill="#2a2ac0" stroke="#2a2ac0" class="mono" filter="url(#bl)">12th&#160;house:</text>
<text transform="translate(677.1 295) scale(1 1.03)" fill="#d8d866" stroke="#d8d866" class="mono">&#160;4Cap58</text>
<text transform="translate(595.02 319) scale(1 1.03)" fill="#b42434" stroke="#b42434" class="mono">Sun</text>
<text transform="translate(619.5 319) scale(1 1.03)" fill="#b42434" stroke="#b42434" class="mono">:</text>
<text transform="translate(633.9 319) scale(1 1.03)" fill="#b42434" stroke="#b42434" class="mono">&#160;3Leo21</text>
<text transform="translate(698.7 319) scale(1 1.03)" fill="#d0d0d0" stroke="#d0d0d0" class="mono">-&#160;0°00'</text>
<text transform="translate(590.7 331) scale(1 1.03)" fill="#2a2ac0" stroke="#2a2ac0" class="mono" filter="url(#bl)">Moon</text>
<text transform="translate(619.5 331) scale(1 1.03)" fill="#2a2ac0" stroke="#2a2ac0" class="mono" filter="url(#bl)">:</text>
<text transform="translate(633.9 331) scale(1 1.03)" fill="#2a2ac0" stroke="#2a2ac0" class="mono" filter="url(#bl)">14Sco17</text>
<text transform="translate(698.7 331) scale(1 1.03)" fill="#d0d0d0" stroke="#d0d0d0" class="mono">-&#160;0°38'</text>
<text transform="translate(590.7 343) scale(1 1.03)" fill="#3cc83c" stroke="#3cc83c" class="mono">Merc</text>
<text transform="translate(619.5 343) scale(1 1.03)" fill="#3cc83c" stroke="#3cc83c" class="mono">:</text>
<text transform="translate(633.9 343) scale(1 1.03)" fill="#d8d866" stroke="#d8d866" class="mono">&#160;0Vir26</text>
<text transform="translate(698.7 343) scale(1 1.03)" fill="#d0d0d0" stroke="#d0d0d0" class="mono">-&#160;0°56'</text>
<text transform="translate(590.7 355) scale(1 1.03)" fill="#3cc83c" stroke="#3cc83c" class="mono">Venu</text>
<text transform="translate(619.5 355) scale(1 1.03)" fill="#3cc83c" stroke="#3cc83c" class="mono">:</text>
<text transform="translate(633.9 355) scale(1 1.03)" fill="#3cc83c" stroke="#3cc83c" class="mono">20Gem09</text>
<text transform="translate(698.7 355) scale(1 1.03)" fill="#d0d0d0" stroke="#d0d0d0" class="mono">-&#160;4°32'</text>
<text transform="translate(590.7 367) scale(1 1.03)" fill="#b42434" stroke="#b42434" class="mono">Mars</text>
<text transform="translate(619.5 367) scale(1 1.03)" fill="#b42434" stroke="#b42434" class="mono">:</text>
<text transform="translate(633.9 367) scale(1 1.03)" fill="#b42434" stroke="#b42434" class="mono">20Leo15</text>
<text transform="translate(698.7 367) scale(1 1.03)" fill="#d0d0d0" stroke="#d0d0d0" class="mono">+&#160;1°10'</text>
<text transform="translate(590.7 379) scale(1 1.03)" fill="#b42434" stroke="#b42434" class="mono">Jupi</text>
<text transform="translate(619.5 379) scale(1 1.03)" fill="#b42434" stroke="#b42434" class="mono">:</text>
<text transform="translate(633.9 379) scale(1 1.03)" fill="#d8d866" stroke="#d8d866" class="mono">17Vir28</text>
<text transform="translate(698.7 379) scale(1 1.03)" fill="#d0d0d0" stroke="#d0d0d0" class="mono">+&#160;1°07'</text>
<text transform="translate(590.7 391) scale(1 1.03)" fill="#d8d866" stroke="#d8d866" class="mono">Satu</text>
<text transform="translate(619.5 391) scale(1 1.03)" fill="#d8d866" stroke="#d8d866" class="mono">:</text>
<text transform="translate(633.9 391) scale(1 1.03)" fill="#2a2ac0" stroke="#2a2ac0" class="mono" filter="url(#bl)">18Can30</text>
<text transform="translate(698.7 391) scale(1 1.03)" fill="#d0d0d0" stroke="#d0d0d0" class="mono">-&#160;0°14'</text>
<text transform="translate(590.7 403) scale(1 1.03)" fill="#3cc83c" stroke="#3cc83c" class="mono">Uran</text>
<text transform="translate(619.5 403) scale(1 1.03)" fill="#3cc83c" stroke="#3cc83c" class="mono">:</text>
<text transform="translate(633.9 403) scale(1 1.03)" fill="#2a2ac0" stroke="#2a2ac0" class="mono" filter="url(#bl)">&#160;5Pis21</text>
<text transform="translate(684.3 403) scale(1 1.03)" fill="#d0d0d0" stroke="#d0d0d0" class="mono">R</text>
<text transform="translate(698.7 403) scale(1 1.03)" fill="#d0d0d0" stroke="#d0d0d0" class="mono">-&#160;0°48'</text>
<text transform="translate(590.7 415) scale(1 1.03)" fill="#2a2ac0" stroke="#2a2ac0" class="mono" filter="url(#bl)">Nept</text>
<text transform="translate(619.5 415) scale(1 1.03)" fill="#2a2ac0" stroke="#2a2ac0" class="mono" filter="url(#bl)">:</text>
<text transform="translate(633.9 415) scale(1 1.03)" fill="#3cc83c" stroke="#3cc83c" class="mono">14Aqu10</text>
<text transform="translate(684.3 415) scale(1 1.03)" fill="#d0d0d0" stroke="#d0d0d0" class="mono">R</text>
<text transform="translate(698.7 415) scale(1 1.03)" fill="#d0d0d0" stroke="#d0d0d0" class="mono">-&#160;0°04'</text>
<text transform="translate(590.7 427) scale(1 1.03)" fill="#2a2ac0" stroke="#2a2ac0" class="mono" filter="url(#bl)">Plut</text>
<text transform="translate(619.5 427) scale(1 1.03)" fill="#2a2ac0" stroke="#2a2ac0" class="mono" filter="url(#bl)">:</text>
<text transform="translate(633.9 427) scale(1 1.03)" fill="#b42434" stroke="#b42434" class="mono">19Sag55</text>
<text transform="translate(684.3 427) scale(1 1.03)" fill="#d0d0d0" stroke="#d0d0d0" class="mono">R</text>
<text transform="translate(698.7 427) scale(1 1.03)" fill="#d0d0d0" stroke="#d0d0d0" class="mono">+&#160;8°45'</text>
<text transform="translate(590.7 439) scale(1 1.03)" fill="#a03cc0" stroke="#a03cc0" class="mono">Chir</text>
<text transform="translate(619.5 439) scale(1 1.03)" fill="#a03cc0" stroke="#a03cc0" class="mono">:</text>
<text transform="translate(633.9 439) scale(1 1.03)" fill="#d8d866" stroke="#d8d866" class="mono">23Cap01</text>
<text transform="translate(684.3 439) scale(1 1.03)" fill="#d0d0d0" stroke="#d0d0d0" class="mono">R</text>
<text transform="translate(698.7 439) scale(1 1.03)" fill="#d0d0d0" stroke="#d0d0d0" class="mono">+&#160;7°28'</text>
<text transform="translate(590.7 451) scale(1 1.03)" fill="#2c9884" stroke="#2c9884" class="mono">Node</text>
<text transform="translate(619.5 451) scale(1 1.03)" fill="#2c9884" stroke="#2c9884" class="mono">:</text>
<text transform="translate(633.9 451) scale(1 1.03)" fill="#d8d866" stroke="#d8d866" class="mono">&#160;7Tau08</text>
<text transform="translate(684.3 451) scale(1 1.03)" fill="#d0d0d0" stroke="#d0d0d0" class="mono">R</text>
<text transform="translate(698.7 451) scale(1 1.03)" fill="#d0d0d0" stroke="#d0d0d0" class="mono">+&#160;0°00'</text>
<text transform="translate(590.7 463) scale(1 1.03)" fill="#2c9884" stroke="#2c9884" class="mono">Fort</text>
<text transform="translate(619.5 463) scale(1 1.03)" fill="#2c9884" stroke="#2c9884" class="mono">:</text>
<text transform="translate(633.9 463) scale(1 1.03)" fill="#d8d866" stroke="#d8d866" class="mono">12Tau07</text>
<text transform="translate(590.7 475) scale(1 1.03)" fill="#a03cc0" stroke="#a03cc0" class="mono">Vrtx</text>
<text transform="translate(619.5 475) scale(1 1.03)" fill="#a03cc0" stroke="#a03cc0" class="mono">:</text>
<text transform="translate(633.9 475) scale(1 1.03)" fill="#b42434" stroke="#b42434" class="mono">26Leo42</text>
<text transform="translate(698.7 475) scale(1 1.03)" fill="#d0d0d0" stroke="#d0d0d0" class="mono">+&#160;0°00'</text>
<text transform="translate(590.7 499) scale(1 1.03)" fill="#d0d0d0" stroke="#d0d0d0" class="mono">Fire:&#160;4,&#160;Earth:&#160;5,</text>
<text transform="translate(590.7 511) scale(1 1.03)" fill="#d0d0d0" stroke="#d0d0d0" class="mono">Air&#160;:&#160;3,&#160;Water:&#160;4</text>
<text transform="translate(590.7 523) scale(1 1.03)" fill="#d0d0d0" stroke="#d0d0d0" class="mono">Car:&#160;2,&#160;Fix:&#160;9,&#160;Mut:&#160;5</text>
<text transform="translate(590.7 535) scale(1 1.03)" fill="#d0d0d0" stroke="#d0d0d0" class="mono">Yang:&#160;7,&#160;Yin:&#160;9</text>
<text transform="translate(590.7 547) scale(1 1.03)" fill="#d0d0d0" stroke="#d0d0d0" class="mono">M:&#160;8,&#160;N:&#160;6,&#160;A:&#160;6,&#160;D:&#160;8</text>
<text transform="translate(590.7 559) scale(1 1.03)" fill="#d0d0d0" stroke="#d0d0d0" class="mono">Ang:&#160;5,&#160;Suc:&#160;4,&#160;Cad:&#160;5</text>
<text transform="translate(590.7 571) scale(1 1.03)" fill="#d0d0d0" stroke="#d0d0d0" class="mono">Learn:&#160;9,&#160;Share:&#160;7</text>
<g filter="url(#bm)"><path transform="translate(762.5 159) scale(0.55)" d="M-9.7 -3.3L-5.4 -8.8L-2.4 -3.5L1.9 -9L5.3 -3.5L9.3 -9M-9.7 9L-5.4 3.5L-2.1 8.4L1.9 3.2L5.3 8.4L9.6 2.3" stroke="#cc2232" stroke-width="2.6" fill="none"/></g>
<g><path transform="translate(762.5 171) scale(0.55)" d="M-9 -9C-3 -4 -3 4 -9 9M9 -9C3 -4 3 4 9 9M-8 0L8 0" stroke="#d8d866" stroke-width="2.6" fill="none"/></g>
<g><path transform="translate(762.5 183) scale(0.55)" d="M0 10L0 -3C-1 -8 -4 -10 -6 -9C-8 -8 -9 -6 -9 -3M0 -3C1 -8 4 -10 6 -9C8 -8 9 -6 9 -3" stroke="#3cc83c" stroke-width="2.6" fill="none"/></g>
<g filter="url(#bm)"><path transform="translate(762.5 195) scale(0.55)" d="M7.5 2.5A7.5 7.5 0 1 1 -7.5 2.5A7.5 7.5 0 1 1 7.5 2.5M-8 -10Q-6 -6 -3 -4.5M8 -10Q6 -6 3 -4.5" stroke="#2a2ac0" stroke-width="2.6" fill="none"/></g>
<g filter="url(#bm)"><path transform="translate(762.5 207) scale(0.55)" d="M-9.5 -9Q0 -5 9.5 -9M-9.5 9.5Q0 6 9.5 9.5M-4 -6.5L-4 7.5M4.5 -6.5L4.5 7.5" stroke="#cc2232" stroke-width="2.6" fill="none"/></g>
<g><path transform="translate(762.5 219) scale(0.55)" d="M-8 -3C-7 -9 5 -10 8 -5M8 3C7 9 -5 10 -8 5M-2 -2A3 3 0 1 1 -8 -2A3 3 0 1 1 -2 -2M8 2A3 3 0 1 1 2 2A3 3 0 1 1 8 2" stroke="#d8d866" stroke-width="2.6" fill="none"/></g>
<g><path transform="translate(762.5 231) scale(0.55)" d="M-8.5 8L-6 3.5L-6.5 -6L-4 -9L4 -9L6.5 -6L5 3.5L9 9" stroke="#3cc83c" stroke-width="2.6" fill="none"/></g>
<g filter="url(#bm)"><path transform="translate(762.5 243) scale(0.55)" d="M-10 -10L-6 -8.5L-6 8M-6 -7L-3.5 -10L-1.5 -8.5L-1.5 7M-1.5 -7L1.5 -10L3.7 -8L3.7 6L2 10M3.7 6L8.5 4L8.5 -6.5" stroke="#2a2ac0" stroke-width="2.6" fill="none"/></g>
<g filter="url(#bm)"><path transform="translate(762.5 255) scale(0.55)" d="M-11 6.3L11 6.3M-11 1L-5 1C-6.5 -7 6 -7 4.8 1L11 1" stroke="#cc2232" stroke-width="2.6" fill="none"/></g>
<g><path transform="translate(762.5 267) scale(0.55)" d="M-10 -8L-7 -9L-7 9M-7 -6C-6 -10 -2 -10 -2 -6L-2 9M-2 -6C-1 -10 3 -10 3 -6L3 7C3 9 6 9 9 7M9 7L6.5 4M9 7L5.5 9.5" stroke="#d8d866" stroke-width="2.6" fill="none"/></g>
<g><path transform="translate(762.5 279) scale(0.55)" d="M-9.5 9.5L10 -10M3 -10L10 -10L10 -3M-4.5 -1.5L4.5 7" stroke="#3cc83c" stroke-width="2.6" fill="none"/></g>
<g filter="url(#bm)"><path transform="translate(762.5 291) scale(0.55)" d="M-10 -8L-5.3 2L-0.4 -8M-5.3 2L-5.3 7.5M-0.4 -8C3 -10 9.4 -9 9.4 -6C9.4 -3 6.4 -2.5 6.4 -2.5L10 2.4L8.2 9.7" stroke="#2a2ac0" stroke-width="2.6" fill="none"/></g>
<g filter="url(#bm)"><path transform="translate(762.5 315) scale(0.5)" d="M9.5 0A9.5 9.5 0 1 1 -9.5 0A9.5 9.5 0 1 1 9.5 0M1 0A1 1 0 1 1 -1 0A1 1 0 1 1 1 0" stroke="#cc2232" stroke-width="2.8" fill="none"/></g>
<g filter="url(#bm)"><path transform="translate(762.5 327) scale(0.5)" d="M-6 -10.5C11 -10.5 11 10.5 -6 10.5C1 6 1 -6 -6 -10.5Z" stroke="#2a2ac0" stroke-width="2.8" fill="none"/></g>
<g><path transform="translate(762.5 339) scale(0.5)" d="M-5 -10Q0 -6 5 -10M5 -2A5 5 0 1 1 -5 -2A5 5 0 1 1 5 -2M0 3L0 10M-4.5 7.5L4.5 7.5" stroke="#3cc83c" stroke-width="2.8" fill="none"/></g>
<g><path transform="translate(762.5 351) scale(0.5)" d="M6 -3.5A6 6 0 1 1 -6 -3.5A6 6 0 1 1 6 -3.5M0 2.5L0 10.5M-5 6.5L5 6.5" stroke="#3cc83c" stroke-width="2.8" fill="none"/></g>
<g filter="url(#bm)"><path transform="translate(762.5 363) scale(0.5)" d="M6 4A7 7 0 1 1 -8 4A7 7 0 1 1 6 4M4 -1L10.5 -10M5 -10L10.5 -10L10.5 -4.5" stroke="#cc2232" stroke-width="2.8" fill="none"/></g>
<g filter="url(#bm)"><path transform="translate(762.5 375) scale(0.5)" d="M-5.8 -9C-3 -8 -3 -6 -3.5 -4L-6.7 6L10 6M5.2 -9L5.2 9.5" stroke="#cc2232" stroke-width="2.8" fill="none"/></g>
<g><path transform="translate(762.5 387) scale(0.5)" d="M-4.5 -10L-4.5 8M-8 -6.5L-1 -6.5M-4.5 1.5C-2 -3 5 -3 5 2C5 5 3 7 6 10" stroke="#d8d866" stroke-width="2.8" fill="none"/></g>
<g><path transform="translate(762.5 399) scale(0.5)" d="M-6.7 -10L-4.3 -2.8L-6.1 3M6.7 -9.5L4.3 -2.8L6.1 3M-4.9 -2.8L4.9 -2.8M0 -4.6L0 4.6M2.8 7.7A2.8 2.8 0 1 1 -2.8 7.7A2.8 2.8 0 1 1 2.8 7.7" stroke="#3cc83c" stroke-width="2.8" fill="none"/></g>
<g filter="url(#bm)"><path transform="translate(762.5 411) scale(0.5)" d="M-8.5 -9L-8 -2C-7 3 7 3 8 -2L8.5 -9M0 -10L0 10M-5 6L5 6M-9.5 -7L-8.5 -9.5L-7 -7M7 -7L8.5 -9.5L9.5 -7" stroke="#2a2ac0" stroke-width="2.8" fill="none"/></g>
<g filter="url(#bm)"><path transform="translate(762.5 423) scale(0.5)" d="M-9 2L7 2C8 -6 3 -11 -1 -11C-6 -11 -9 -6 -9 0C-9 7 -4 10 0 10L7 10" stroke="#2a2ac0" stroke-width="2.8" fill="none"/></g>
<g><path transform="translate(762.5 435) scale(0.5)" d="M-4.5 -10L-4.5 5M-4.5 -2L4.5 -10M-4.5 -2L4.5 5M-2 8A2.5 2.5 0 1 1 -7 8A2.5 2.5 0 1 1 -2 8" stroke="#a03cc0" stroke-width="2.8" fill="none"/></g>
<g><path transform="translate(762.5 447) scale(0.5)" d="M-5 6C-9 0 -8 -9 0 -9C8 -9 9 0 5 6M-5 6L-7.5 9L-5 11L-2.5 8.5L-5 6M5 6L7.5 9L5 11L2.5 8.5L5 6" stroke="#2c9884" stroke-width="2.8" fill="none"/></g>
<g><path transform="translate(762.5 459) scale(0.5)" d="M8 0A8 8 0 1 1 -8 0A8 8 0 1 1 8 0M-5.6 -5.6L5.6 5.6M5.6 -5.6L-5.6 5.6" stroke="#2c9884" stroke-width="2.8" fill="none"/></g>
<g><path transform="translate(762.5 471) scale(0.5)" d="M-1 -10L-1 -1M-1 -1L-8 9L7 9L-1 -1" stroke="#a03cc0" stroke-width="2.8" fill="none"/></g></g>
</svg>
</div>
<div id="vs">
 <div class="sbtn" style="left:0;top:0;width:17px;height:16px;"><svg width="17" height="16"><path d="M4.5 10L8.5 6L12.5 10Z" fill="#000"/></svg></div>
 <div class="sbtn" style="left:0;top:18px;width:17px;height:17px;"></div>
 <div class="sbtn" style="left:0;top:557px;width:17px;height:16px;"><svg width="17" height="16"><path d="M4.5 6L8.5 10L12.5 6Z" fill="#000"/></svg></div>
</div>
<div id="hs">
 <div class="sbtn" style="left:0;top:0;width:16px;height:17px;"><svg width="16" height="17"><path d="M10 4.5L6 8.5L10 12.5Z" fill="#000"/></svg></div>
 <div class="sbtn" style="left:18px;top:0;width:18px;height:17px;"></div>
 <div class="sbtn" style="left:751px;top:0;width:16px;height:17px;"><svg width="16" height="17"><path d="M6 4.5L10 8.5L6 12.5Z" fill="#000"/></svg></div>
</div>
<div id="grip"><svg width="20" height="19"><path d="M18 6L6 18M18 10L10 18M18 14L14 18" stroke="#808080" stroke-width="1"/><path d="M19 7L7 19M19 11L11 19M19 15L15 19" stroke="#fff" stroke-width="1"/></svg></div>
<div id="rframe"></div>
<div id="bframe"></div>
</body></html>
